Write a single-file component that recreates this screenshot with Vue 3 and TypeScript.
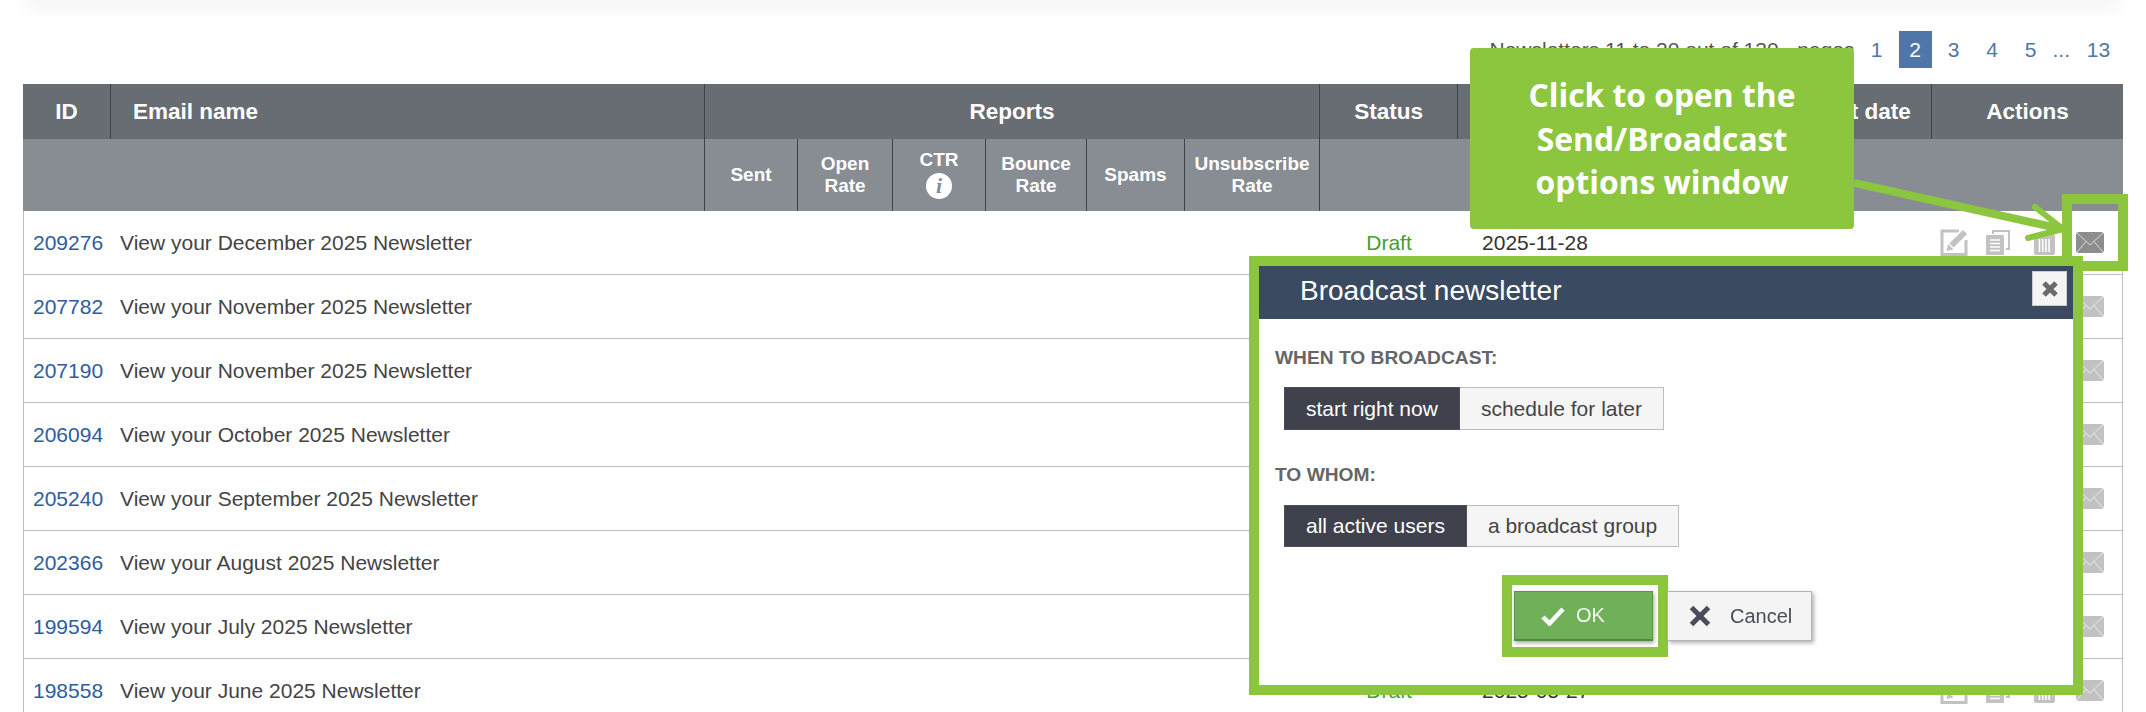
<script setup lang="ts">
interface Row {
  id: number
  name: string
  date: string
}

const rows: Row[] = [
  { id: 209276, name: 'View your December 2025 Newsletter', date: '2025-11-28' },
  { id: 207782, name: 'View your November 2025 Newsletter', date: '2025-10-30' },
  { id: 207190, name: 'View your November 2025 Newsletter', date: '2025-10-21' },
  { id: 206094, name: 'View your October 2025 Newsletter', date: '2025-09-26' },
  { id: 205240, name: 'View your September 2025 Newsletter', date: '2025-08-28' },
  { id: 202366, name: 'View your August 2025 Newsletter', date: '2025-07-29' },
  { id: 199594, name: 'View your July 2025 Newsletter', date: '2025-06-27' },
  { id: 198558, name: 'View your June 2025 Newsletter', date: '2025-05-27' },
]

const colWidths = [87, 594, 93, 95, 93, 101, 98, 135, 138, 331, 143, 192]
</script>

<template>
  <div class="page">
    <div class="topbar"></div>

    <div class="pager">
      <span class="pager-text">Newsletters 11 to 20 out of 130 - pages</span>
      <a class="page-link">1</a>
      <a class="page-link current">2</a>
      <a class="page-link">3</a>
      <a class="page-link">4</a>
      <a class="page-link">5</a>
      <span class="dots">...</span>
      <a class="page-link">13</a>
    </div>

    <table class="grid">
      <colgroup>
        <col v-for="(w, i) in colWidths" :key="i" :style="{ width: w + 'px' }" />
      </colgroup>
      <thead>
        <tr class="head-main">
          <th>ID</th>
          <th class="left">Email name</th>
          <th colspan="6">Reports</th>
          <th>Status</th>
          <th>Creation date</th>
          <th>Sent date</th>
          <th>Actions</th>
        </tr>
        <tr class="head-sub">
          <th colspan="2"></th>
          <th>Sent</th>
          <th>Open<br />Rate</th>
          <th class="ctr">CTR<span class="info">i</span></th>
          <th>Bounce<br />Rate</th>
          <th>Spams</th>
          <th>Unsubscribe<br />Rate</th>
          <th colspan="4"></th>
        </tr>
      </thead>
      <tbody>
        <tr v-for="(row, idx) in rows" :key="row.id">
          <td class="id"><a>{{ row.id }}</a></td>
          <td class="name" colspan="7">{{ row.name }}</td>
          <td class="status">Draft</td>
          <td class="date" colspan="2">{{ row.date }}</td>
          <td class="actions">
            <div class="icons" :class="{ hot: idx === 0 }">
              <svg class="ic-edit" width="28" height="27" viewBox="0 0 28 27">
                <path d="M19 2H2v23.5h24V11" fill="none" stroke="#c2c2c2" stroke-width="3" />
                <path d="M25 3 11.500 16.500" fill="none" stroke="#fff" stroke-width="9" />
                <path d="M25 3 11.500 16.500" fill="none" stroke="#c2c2c2" stroke-width="6" />
                <path d="M6.500 22l1.500-7 5.500 5.500z" fill="#c2c2c2" />
              </svg>
              <svg class="ic-copy" width="24" height="25" viewBox="0 0 24 25">
                <path d="M7 4V1h16v18h-3" fill="none" stroke="#c2c2c2" stroke-width="2" />
                <rect x="0" y="5" width="18" height="20" rx="1" fill="#c2c2c2" />
                <path d="M4 10h10M4 13.500h10M4 17h10M4 20.500h10" stroke="#fff" stroke-width="1.600" />
              </svg>
              <svg class="ic-trash" width="21" height="21" viewBox="0 0 21 21">
                <rect x="0" y="0" width="21" height="21" rx="2" fill="#c2c2c2" />
                <path d="M5.500 5v13M8.700 5v13M11.900 5v13M15.100 5v13" stroke="#fff" stroke-width="1.600" />
              </svg>
              <svg class="ic-mail" width="28" height="21" viewBox="0 0 28 21">
                <rect width="28" height="21" rx="3" />
                <path d="M1 1l13 12L27 1M1 20l9-10.500M27 20l-9-10.500" fill="none" stroke="#fff" stroke-opacity="0.65" stroke-width="1" />
              </svg>
            </div>
          </td>
        </tr>
      </tbody>
    </table>

    <!-- annotation layer painted on the screenshot -->
    <div class="callout">Click to open the<br />Send/Broadcast<br />options window</div>
    <svg class="arrow" width="220" height="80" viewBox="0 0 220 80">
      <path d="M0 13 208 59" fill="none" stroke="#8cc63f" stroke-width="8" />
      <path d="M181 37 209 59 174 68" fill="none" stroke="#8cc63f" stroke-width="6" stroke-linecap="round" />
    </svg>
    <div class="mail-frame"></div>

    <div class="modal">
      <div class="modal-head">
        <span class="modal-title">Broadcast newsletter</span>
        <button class="close" type="button">
          <svg width="18" height="18" viewBox="0 0 18 18">
            <path d="M3 3l12 12M15 3 3 15" stroke="#6b6b6b" stroke-width="5" />
          </svg>
        </button>
      </div>
      <div class="modal-body">
        <div class="label">WHEN TO BROADCAST:</div>
        <div class="toggle">
          <span class="opt on">start right now</span>
          <span class="opt">schedule for later</span>
        </div>
        <div class="label second">TO WHOM:</div>
        <div class="toggle short">
          <span class="opt on">all active users</span>
          <span class="opt">a broadcast group</span>
        </div>
        <div class="footer">
          <div class="ok-frame">
            <button class="btn ok" type="button">
              <svg width="24" height="20" viewBox="0 0 24 20">
                <path d="M2 11l6.500 6.500L22 3" fill="none" stroke="#fff" stroke-width="4.500" />
              </svg>
              OK
            </button>
          </div>
          <button class="btn cancel" type="button">
            <svg width="22" height="22" viewBox="0 0 22 22">
              <path d="M2.500 2.500l17 17M19.500 2.500l-17 17" stroke="#4a4d58" stroke-width="5" />
            </svg>
            Cancel
          </button>
        </div>
      </div>
    </div>
  </div>
</template>

<style>
html, body {
  overflow: hidden;
  background: #fff;
}
</style>

<style scoped>
.page {
  position: relative;
  width: 2146px;
  height: 712px;
  overflow: hidden;
  font-family: "Liberation Sans", Arial, sans-serif;
  font-size: 21px;
  color: #444;
}

.topbar {
  height: 0;
  margin: 0 30px;
  box-shadow: 0 0 20px 2px rgba(0, 0, 0, 0.22);
}

.pager {
  display: flex;
  justify-content: flex-end;
  align-items: center;
  gap: 5.5px;
  height: 37px;
  padding: 31px 31px 16px 0;
}

.pager-text {
  color: #555;
}

.page-link {
  width: 33px;
  height: 37px;
  line-height: 37px;
  text-align: center;
  color: #4f76a8;
}

.page-link.current {
  background: #4f76a8;
  color: #fff;
}

.dots {
  width: 24px;
  color: #4f76a8;
}

.grid {
  table-layout: fixed;
  border-collapse: separate;
  border-spacing: 0;
  width: 2100px;
  margin-left: 23px;
}

.grid th {
  box-sizing: border-box;
  color: #fff;
  font-weight: bold;
  padding: 0;
  text-align: center;
}

.head-main th {
  height: 55px;
  background: #686c73;
  font-size: 22.5px;
  border-left: 1px solid #3f4247;
}

.head-main th:first-child {
  border-left: 0;
}

.head-main th.left {
  text-align: left;
  padding-left: 22px;
}

.head-sub th {
  height: 72px;
  background: #888c93;
  font-size: 19px;
  line-height: 22px;
  border-left: 1px solid #3f4247;
}

.head-sub th:first-child {
  border-left: 0;
}

.grid .ctr {
  vertical-align: top;
  padding-top: 10px;
}

.info {
  display: block;
  width: 26px;
  height: 26px;
  margin: 2px auto 0;
  border-radius: 50%;
  background: #fff;
  color: #888c93;
  font: italic bold 22px/26px "Liberation Serif", serif;
}

.grid td {
  height: 64px;
  box-sizing: border-box;
  padding: 0;
  border-bottom: 1px solid #bdbdbd;
  vertical-align: middle;
  white-space: nowrap;
}

.grid .id {
  padding-left: 9px;
  border-left: 1px solid #bdbdbd;
}

.id a {
  color: #2f5c9e;
}

.grid .name {
  padding-left: 10px;
}

.grid .status {
  text-align: center;
  padding-left: 2px;
  color: #4a9e2f;
}

.grid .date {
  padding-left: 25px;
  color: #333;
}

.grid .actions {
  border-right: 1px solid #bdbdbd;
}

.icons {
  display: flex;
  align-items: center;
  padding-left: 9px;
}

.ic-copy {
  margin-left: 18px;
}

.ic-trash {
  margin-left: 24px;
  margin-top: 4px;
}

.ic-mail {
  margin-left: 21px;
  fill: #c2c2c2;
}

.icons.hot .ic-mail {
  fill: #8d8d8d;
}

.icons svg {
  display: block;
  filter: blur(0.3px);
}

.callout {
  position: absolute;
  left: 1470px;
  top: 48px;
  width: 384px;
  height: 181px;
  display: flex;
  align-items: center;
  justify-content: center;
  text-align: center;
  background: #8cc63f;
  border-radius: 4px;
  color: #fff;
  font: bold 31.800px/43.500px "Open Sans", sans-serif;
}

.arrow {
  position: absolute;
  left: 1854px;
  top: 170px;
}

.mail-frame {
  position: absolute;
  left: 2062px;
  top: 194px;
  width: 46px;
  height: 57px;
  border: 10px solid #8cc63f;
}

.modal {
  position: absolute;
  left: 1249px;
  top: 256px;
  width: 814px;
  height: 419px;
  border: 10px solid #8cc63f;
  background: #fff;
}

.modal-head {
  position: relative;
  height: 53px;
  display: flex;
  align-items: center;
  padding-left: 41px;
  background: #3a4a60;
}

.modal-title {
  color: #fff;
  font-size: 28px;
  position: relative;
  top: -2px;
}

.close {
  position: absolute;
  left: 773px;
  top: 5px;
  width: 35px;
  height: 35px;
  padding: 0;
  display: flex;
  align-items: center;
  justify-content: center;
  background: #f4f4f4;
  border: 1px solid #ccc;
}

.modal-body {
  padding: 28px 0 0 16px;
}

.label {
  font-size: 19.200px;
  line-height: 22px;
  font-weight: bold;
  color: #666;
}

.label.second {
  margin-top: 34px;
}

.toggle {
  display: flex;
  height: 43px;
  margin: 18px 0 0 9px;
}

.toggle.short {
  height: 42px;
  margin-top: 19px;
}

.opt {
  box-sizing: border-box;
  display: flex;
  align-items: center;
  padding: 0 21px;
  background: #f5f5f5;
  border: 1px solid #bdbdbd;
  border-left: 0;
  color: #444;
}

.opt.on {
  background: #3f424d;
  border: 1px solid #4a4d5a;
  color: #fff;
}

.footer {
  display: flex;
  align-items: flex-start;
  margin: 28px 0 0 227px;
}

.ok-frame {
  display: flex;
  box-sizing: border-box;
  width: 166px;
  height: 82px;
  padding: 6px 5px 5px 2px;
  border: 10px solid #8cc63f;
}

.btn {
  display: flex;
  align-items: center;
  box-sizing: border-box;
  height: 50px;
  padding: 0;
  font: 20px "Liberation Sans", Arial, sans-serif;
  filter: blur(0.4px);
}

.ok {
  width: 139px;
  gap: 11px;
  padding-left: 26px;
  background: #6fb058;
  color: #f2f7ee;
  border: 1px solid #5a9447;
  border-bottom: 2px solid #4f8a3e;
  box-shadow: 1px 2px 4px rgba(0, 0, 0, 0.35);
}

.cancel {
  width: 145px;
  margin: 16px 0 0 -1px;
  gap: 19px;
  padding-left: 21px;
  background: #f4f4f4;
  color: #4a4d58;
  border: 1px solid #b5b5b5;
  box-shadow: 2px 2px 4px rgba(0, 0, 0, 0.3);
}
</style>
